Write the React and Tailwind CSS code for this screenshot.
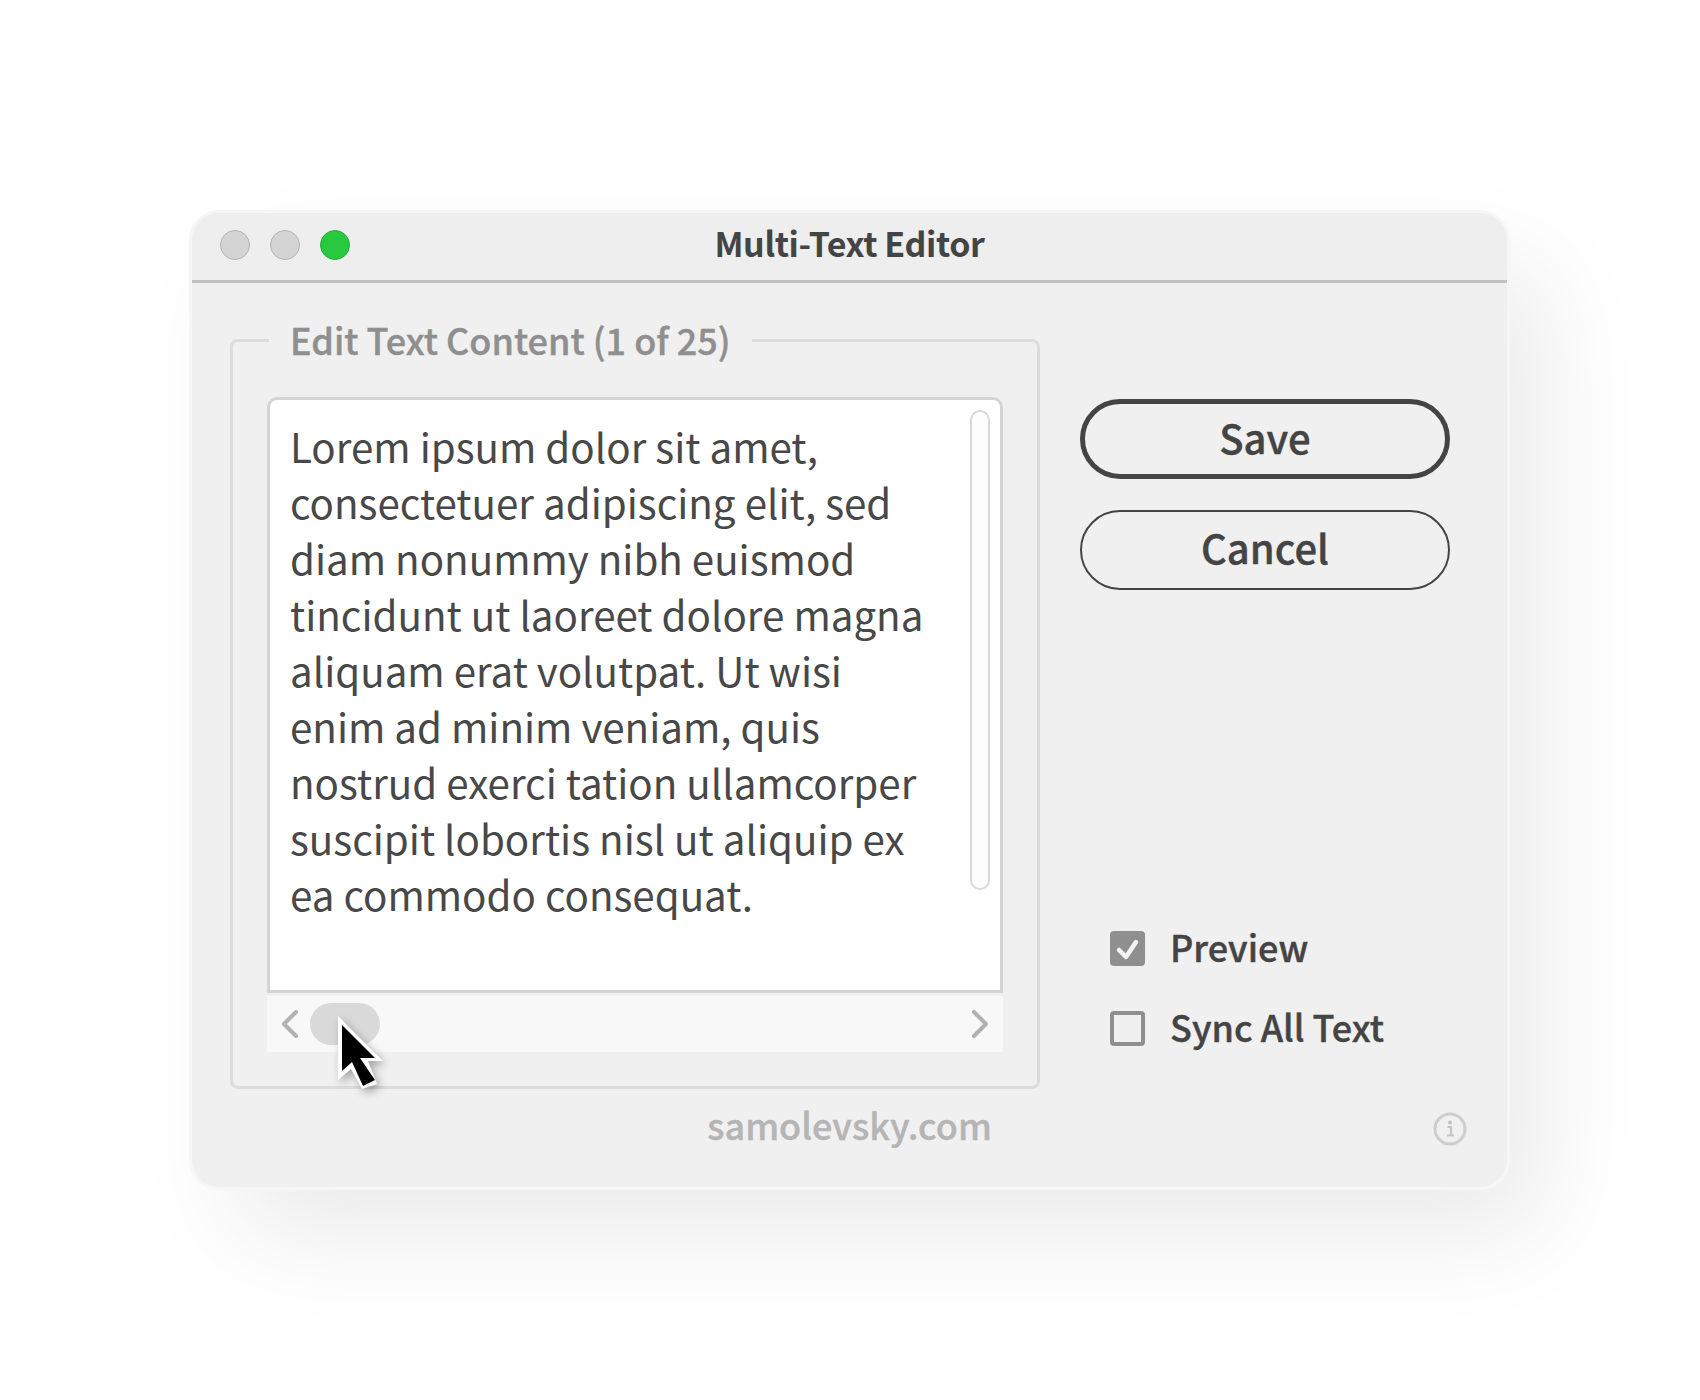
import React from 'react';

const FONT = "font-['Noto_Sans_CJK_SC','Noto_Sans',sans-serif]";

const LINES = [
  'Lorem ipsum dolor sit amet,',
  'consectetuer adipiscing elit, sed',
  'diam nonummy nibh euismod',
  'tincidunt ut laoreet dolore magna',
  'aliquam erat volutpat. Ut wisi',
  'enim ad minim veniam, quis',
  'nostrud exerci tation ullamcorper',
  'suscipit lobortis nisl ut aliquip ex',
  'ea commodo consequat.',
];

const Chevron = ({ d }) => (
  <svg width="18" height="28" viewBox="0 0 18 28" fill="none" stroke="#b2b2b2" strokeWidth="4" strokeLinecap="round" strokeLinejoin="round">
    <path d={d} />
  </svg>
);

const Cursor = () => (
  <svg className="absolute left-[330px] top-[1010px] drop-shadow-[3px_4px_4px_rgba(0,0,0,0.3)]" width="60" height="85" viewBox="330 1010 60 85">
    <path d="M338 1016 L383 1061 L368 1061 L377 1084 L362 1089 L351 1069 L338 1080 Z" fill="#fff" />
    <path d="M342 1025 L375 1058 L360 1058 L375 1080 L363 1086 L352 1062 L342 1071 Z" fill="#000" />
  </svg>
);

const InfoIcon = () => (
  <svg width="34" height="34" viewBox="0 0 34 34" fill="none">
    <circle cx="17" cy="17" r="15" stroke="#cecece" strokeWidth="3" />
    <circle cx="17" cy="10.5" r="2" fill="#c4c4c4" />
    <path d="M14.5 15 H18 V23 M14 23.5 H21" stroke="#c4c4c4" strokeWidth="2.2" />
  </svg>
);

export default function App() {
  return (
    <div className={`relative min-h-[1400px] bg-white pl-[189px] pt-[210px] ${FONT}`}>
      {/* Window */}
      <div className="box-border flex h-[980px] w-[1321px] flex-col rounded-[30px] border-[3px] border-[#f6f6f6] bg-[#f0f0f0] shadow-[40px_50px_110px_-10px_rgba(0,0,0,0.09)]">
        {/* Title bar */}
        <div className="relative flex h-[70px] shrink-0 items-center border-b-[3px] border-[#bfbfbf] bg-[#eeeeee] pb-[4px] pl-[28px] rounded-t-[27px]">
          <div className="flex gap-[20px]">
            <div className="h-[30px] w-[30px] rounded-full border border-[#b4b4b4] bg-[#d4d4d4]" />
            <div className="h-[30px] w-[30px] rounded-full border border-[#b4b4b4] bg-[#d4d4d4]" />
            <div className="h-[30px] w-[30px] rounded-full border border-[#24ae39] bg-[#28c83f]" />
          </div>
          <div className="absolute inset-x-0 top-[8px] text-center text-[34px] font-bold leading-[44px] tracking-[-0.4px] text-[#444444]">
            Multi-Text Editor
          </div>
        </div>

        {/* Body */}
        <div className="flex pl-[38px] pt-[35px]">
          <fieldset className="box-border h-[771px] w-[810px] shrink-0 rounded-[8px] border-[3px] border-[#dcdcdc] px-[34px]">
            <legend className="ml-[2px] px-[21px] text-[36px] font-medium leading-[44px] -translate-y-[1px] text-[#8f8f8f] [-webkit-text-stroke:0.4px]">
              Edit Text Content (1 of 25)
            </legend>
            <div className="mt-[35px] flex flex-col gap-[3px]">
              <div className="relative box-border h-[596px] rounded-t-[10px] border-[3px] border-[#d4d4d4] bg-white pl-[20px] pt-[18px] text-[40.3px] leading-[56px] text-[#484848]">
                {LINES.map((line) => (
                  <div key={line} className="whitespace-nowrap">{line}</div>
                ))}
                <div className="absolute right-[10px] top-[10px] box-border h-[480px] w-[20px] rounded-full border-2 border-[#d9d9d9] bg-[#fdfdfd]" />
              </div>
              <div className="flex h-[56px] items-center justify-between bg-[#f8f8f8] pl-[14px] pr-[14px]">
                <div className="flex items-center gap-[11px]">
                  <Chevron d="M15 2 L3 14 L15 26" />
                  <div className="h-[42px] w-[70px] rounded-full bg-[#d9d9d9]" />
                </div>
                <Chevron d="M3 2 L15 14 L3 26" />
              </div>
            </div>
          </fieldset>

          {/* Right column */}
          <div className="ml-[40px] flex h-[771px] w-[370px] flex-col pt-[81px]">
            <button className="box-border h-[80px] rounded-full border-[5px] border-[#444444] pb-[5px] text-[40px] font-medium leading-none text-[#444444] [-webkit-text-stroke:0.4px]">
              Save
            </button>
            <button className="mt-[31px] box-border h-[80px] rounded-full border-2 border-[#444444] pb-[7px] text-[40px] font-medium leading-none text-[#444444] [-webkit-text-stroke:0.4px]">
              Cancel
            </button>
            <div className="mt-[341px] flex flex-col gap-[45px] pl-[30px] text-[36px] font-medium leading-[35px] text-[#444444] [-webkit-text-stroke:0.4px]">
              <div className="flex items-center gap-[25px]">
                <div className="flex h-[35px] w-[35px] items-center justify-center rounded-[4px] bg-[#8f8f8f]">
                  <svg width="26" height="26" viewBox="0 0 26 26" fill="none" stroke="#f4f4f4" strokeWidth="4.5" strokeLinecap="round" strokeLinejoin="round">
                    <path d="M4 14 L11 21 L21 6" />
                  </svg>
                </div>
                <span className="-translate-y-[2px]">Preview</span>
              </div>
              <div className="flex items-center gap-[25px]">
                <div className="box-border h-[35px] w-[35px] rounded-[4px] border-4 border-[#8f8f8f]" />
                <span className="-translate-y-[2px]">Sync All Text</span>
              </div>
            </div>
          </div>
        </div>

        {/* Footer */}
        <div className="relative mt-[13px] flex h-[44px] items-center justify-center">
          <span className="text-[36px] font-medium leading-[44px] text-[#b5b5b5] [-webkit-text-stroke:0.4px]">samolevsky.com</span>
          <div className="absolute right-[40px] top-[10px]">
            <InfoIcon />
          </div>
        </div>
      </div>

      <Cursor />
    </div>
  );
}
